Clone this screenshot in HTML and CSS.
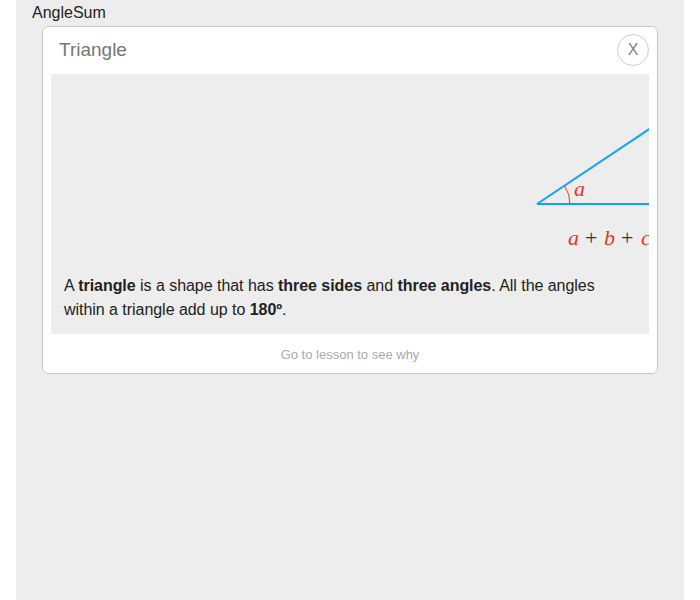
FILE: index.html
```html
<!DOCTYPE html>
<html>
<head>
<meta charset="utf-8">
<link rel="stylesheet" href="styles.css">
</head>
<body>
<div class="app">
  <div class="app-title">AngleSum</div>
  <div class="card">
    <div class="card-header">
      <div class="card-title">Triangle</div>
      <div class="close-btn">X</div>
    </div>
    <div class="card-body">
      <div class="diagram">
        <svg width="598" height="200" viewBox="0 0 598 200">
          <line x1="486" y1="130" x2="620" y2="130" stroke="#11a3f5" stroke-width="2"/>
          <line x1="486" y1="130" x2="640" y2="27.3" stroke="#11a3f5" stroke-width="2"/>
          <path d="M 519 130 A 33 33 0 0 0 513.5 111.7" fill="none" stroke="#e5352c" stroke-width="1"/>
          <text class="math var" x="523" y="122">a</text>
          <text class="math var" x="517" y="171">a</text>
          <text class="math op" x="534" y="171">+</text>
          <text class="math var" x="553" y="171">b</text>
          <text class="math op" x="570" y="171">+</text>
          <text class="math var" x="590" y="171">c</text>
        </svg>
      </div>
      <p class="desc">A <b>triangle</b> is a shape that has <b>three sides</b> and <b>three angles</b>. All the angles within a triangle add up to <b>180º</b>.</p>
    </div>
    <div class="card-footer">Go to lesson to see why</div>
  </div>
</div>
</body>
</html>
```

FILE: styles.css
```css
html, body {
  margin: 0;
  padding: 0;
  background: #ffffff;
}

body {
  font-family: "Liberation Sans", Arial, sans-serif;
}

.app {
  margin: 0 16px;
  background: #ededed;
  min-height: 600px;
  padding: 4px 0 0 0;
  box-sizing: border-box;
}

.app-title {
  font-size: 16px;
  line-height: 18px;
  color: #222;
  padding-left: 16px;
}

.card {
  width: 616px;
  box-sizing: border-box;
  margin: 4px auto 0;
  background: #fff;
  border: 1px solid #c8c8c8;
  border-radius: 6px;
  padding: 0 8px;
}

.card-header {
  height: 47px;
  display: flex;
  justify-content: space-between;
  align-items: flex-start;
}

.card-title {
  font-size: 19px;
  line-height: 24px;
  color: #777;
  padding: 11px 0 0 8px;
  box-sizing: border-box;
}

.close-btn {
  margin-top: 7px;
  width: 32px;
  height: 32px;
  box-sizing: border-box;
  border: 1px solid #cfcfcf;
  border-radius: 50%;
  display: flex;
  align-items: center;
  justify-content: center;
  font-size: 16px;
  color: #808080;
}

.card-body {
  background: #ededed;
}

.diagram {
  height: 200px;
  overflow: hidden;
}

.diagram svg {
  display: block;
}

.math {
  font-family: "Liberation Serif", "Times New Roman", serif;
  font-size: 22px;
}

.math.var {
  font-style: italic;
  fill: #e5352c;
}

.math.op {
  fill: #333;
}

.desc {
  margin: 0;
  padding: 0 13px 12px;
  font-size: 16px;
  line-height: 24px;
  color: #222;
  letter-spacing: -0.04px;
}

.desc b {
  font-weight: bold;
}

.card-footer {
  height: 39px;
  line-height: 39px;
  padding-top: 1px;
  box-sizing: border-box;
  text-align: center;
  font-size: 13px;
  color: #aaa;
}
```
